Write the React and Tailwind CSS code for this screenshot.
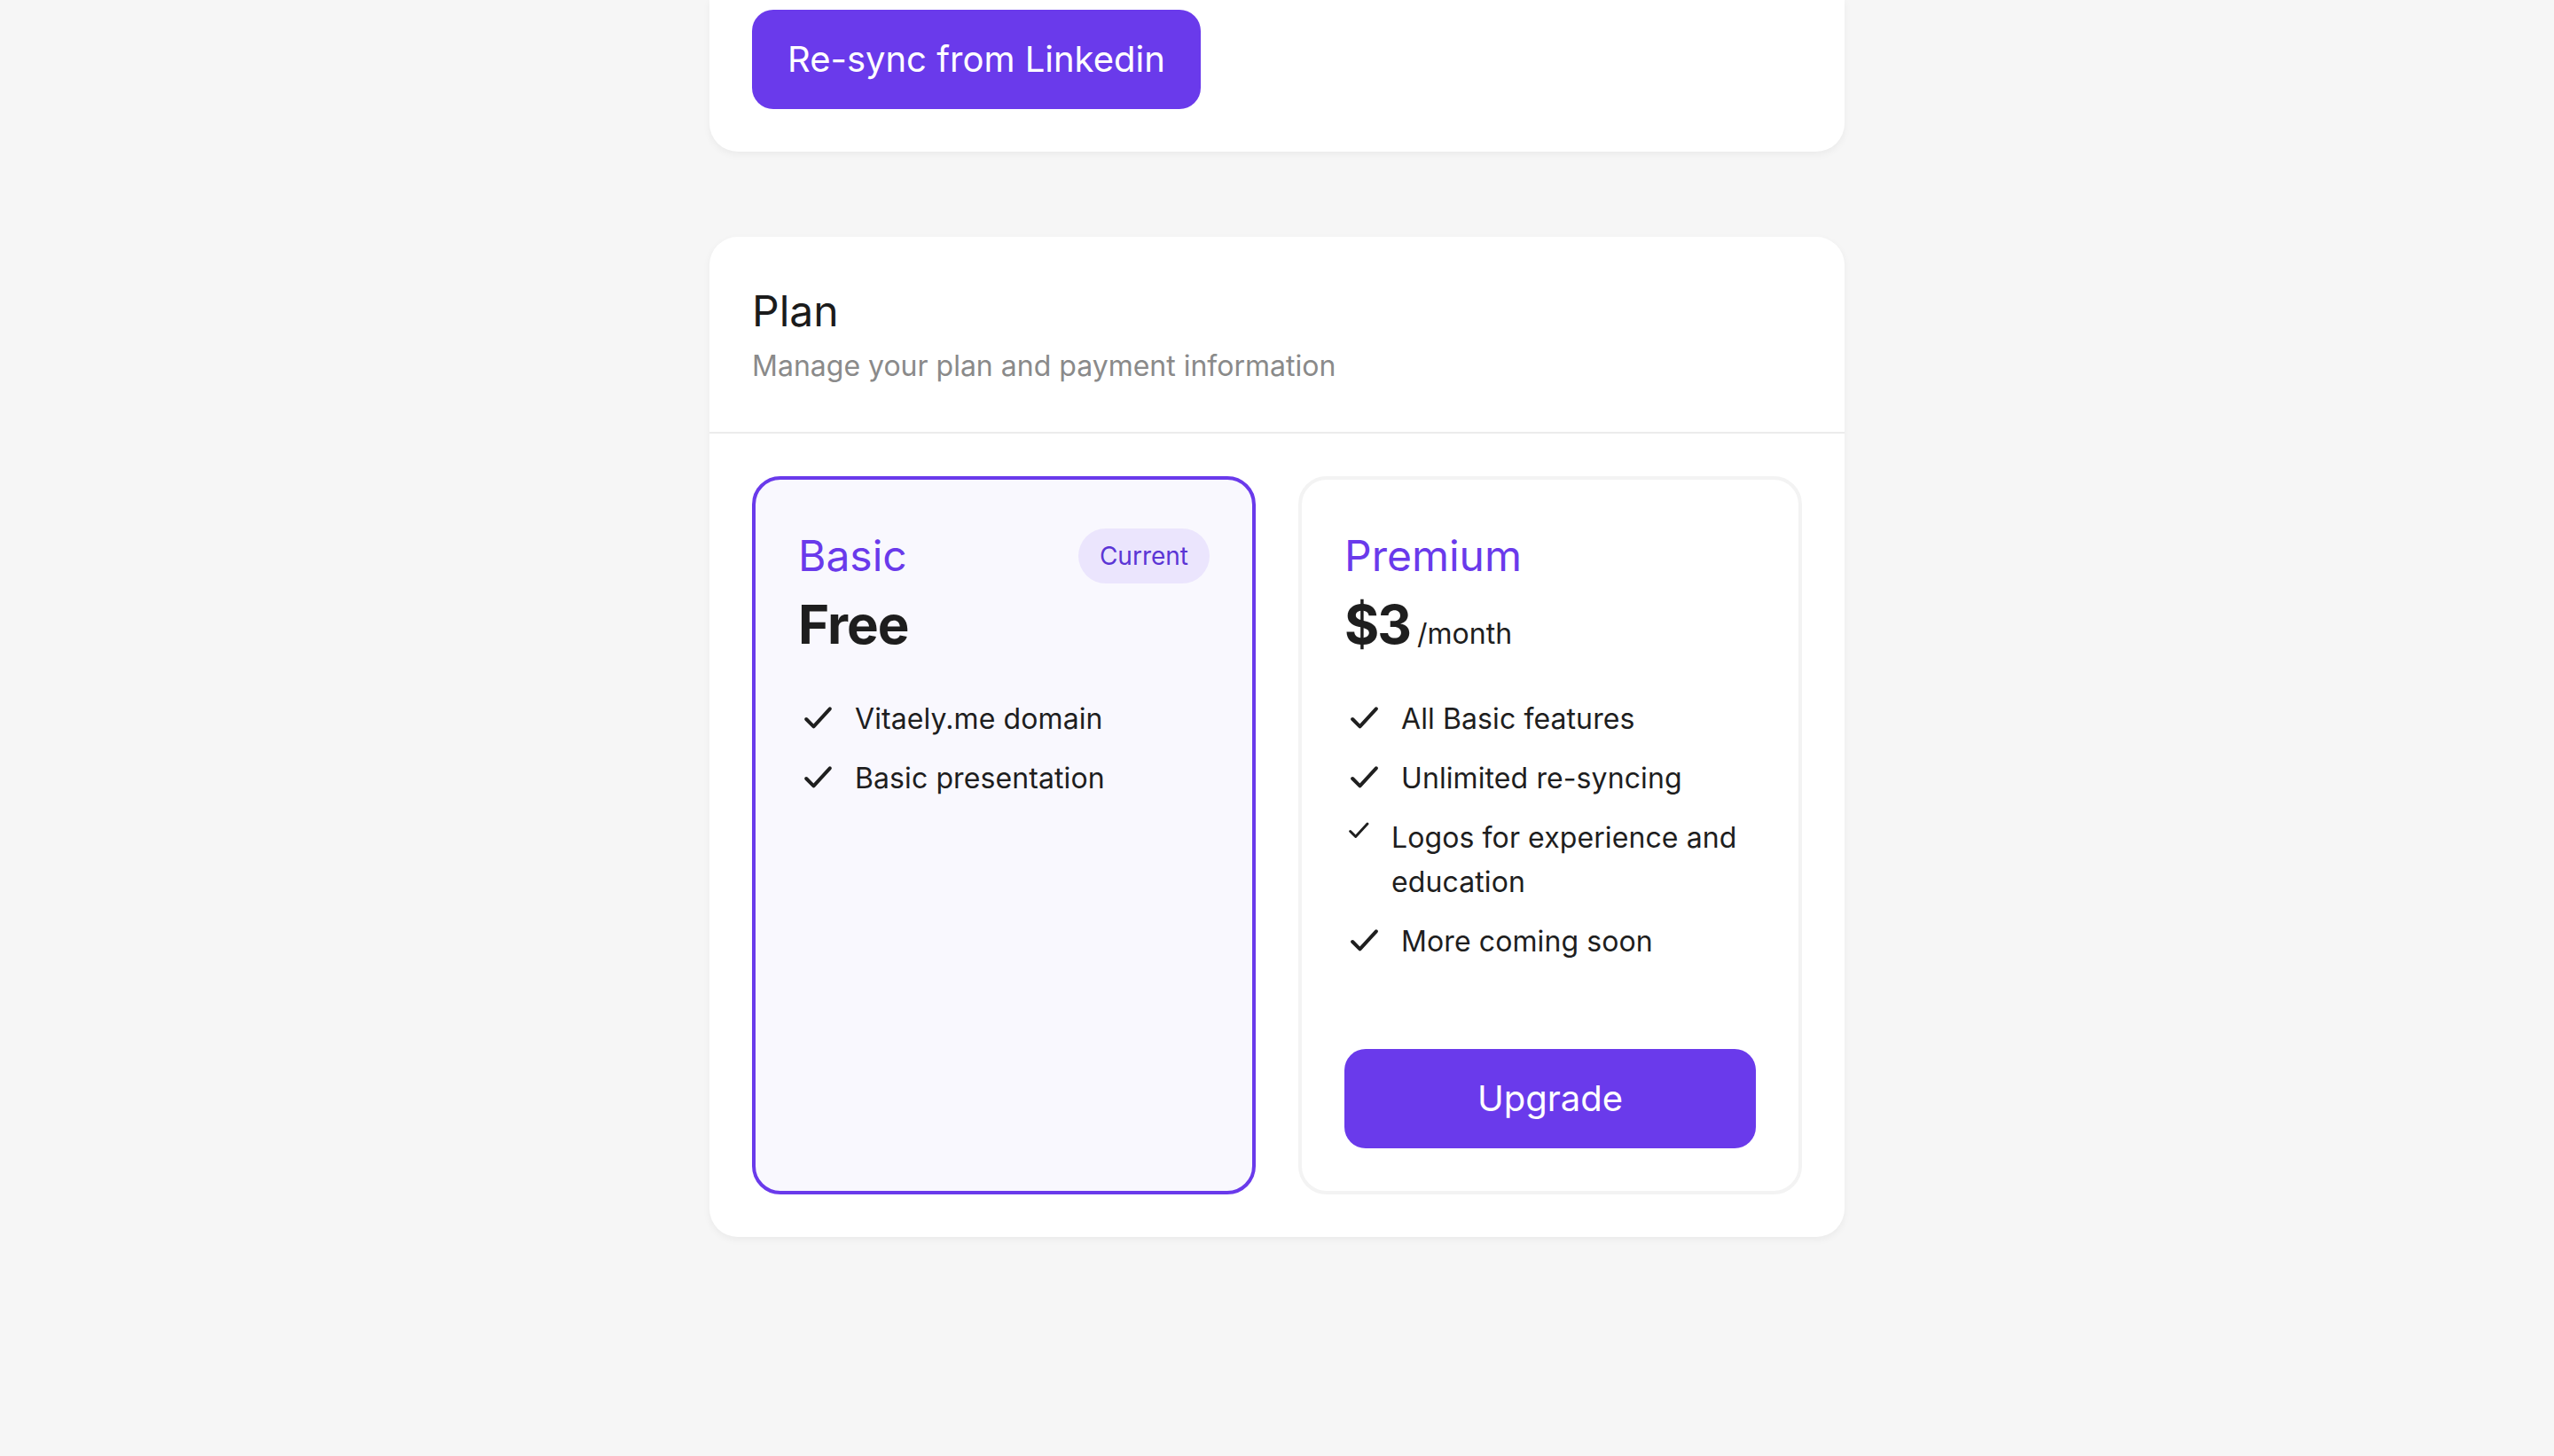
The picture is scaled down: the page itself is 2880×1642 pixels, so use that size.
import React from "react";

function Check({ size = 40, className = "" }) {
  return (
    <svg
      width={size}
      height={size}
      viewBox="0 0 24 24"
      fill="none"
      stroke="#1f1f1f"
      strokeWidth="2.4"
      strokeLinecap="round"
      strokeLinejoin="round"
      className={"shrink-0 " + className}
    >
      <path d="M5.5 12l5 5L21.5 5" />
    </svg>
  );
}

function Feature({ children, small }) {
  return (
    <li className="flex items-start gap-6 leading-[50px]">
      {small ? (
        <Check size={29} className="mt-[3px]" />
      ) : (
        <Check size={40} className="mt-[5px]" />
      )}
      <span>{children}</span>
    </li>
  );
}

export default function App() {
  return (
    <div
      className="min-h-[1642px] w-full bg-[#f6f6f6] text-[#1e1e1e]"
      style={{ fontFamily: "Inter, 'Noto Sans', sans-serif" }}
    >
      <div className="mx-auto flex w-[1280px] flex-col gap-[96px]">
        {/* Top card (scrolled) */}
        <div className="rounded-b-[32px] bg-white px-12 pb-12 pt-[11px] shadow-[0_3px_8px_rgba(0,0,0,0.05)]">
          <button className="h-[112px] rounded-[24px] bg-[#6a3aeb] px-10 text-[40px] text-white">
            Re-sync from Linkedin
          </button>
        </div>

        {/* Plan card */}
        <div className="rounded-[32px] bg-white shadow-[0_3px_8px_rgba(0,0,0,0.05)]">
          <div className="border-b-2 border-[#ececec] px-12 pb-[50px] pt-[52px]">
            <h2 className="text-[48px] leading-[64px] text-[#1b1b1b]">Plan</h2>
            <p className="mt-[6px] text-[32px] leading-[48px] text-[#8a8a8a]">
              Manage your plan and payment information
            </p>
          </div>

          <div className="grid grid-cols-2 gap-12 p-12">
            {/* Basic */}
            <div className="rounded-[32px] border-4 border-[#6a3aeb] bg-[#f9f8fe] px-12 pb-12 pt-[54px]">
              <div className="flex h-[64px] items-center justify-between">
                <span className="text-[48px] leading-[64px] text-[#6a3aeb]">Basic</span>
                <span className="flex h-[62px] items-center rounded-full bg-[#ebe5fd] px-6 text-[28px] text-[#5b35d5]">
                  Current
                </span>
              </div>
              <div className="mt-[9px] h-[72px] text-[60px] font-bold leading-[72px] tracking-[-1px]">Free</div>
              <ul className="mt-[46px] flex flex-col gap-[17px] text-[32px] tracking-[0.1px]">
                <Feature>Vitaely.me domain</Feature>
                <Feature>Basic presentation</Feature>
              </ul>
            </div>

            {/* Premium */}
            <div className="flex flex-col rounded-[32px] border-4 border-[#f3f3f3] bg-white px-12 pb-12 pt-[54px]">
              <div className="h-[64px] text-[48px] leading-[64px] text-[#6a3aeb]">Premium</div>
              <div className="mt-[9px] flex h-[72px] items-baseline gap-2 leading-[72px]">
                <span className="text-[60px] font-bold tracking-[-2px]">$3</span>
                <span className="text-[32px]">/month</span>
              </div>
              <ul className="mt-[46px] flex flex-col gap-[17px] text-[32px] tracking-[0.1px]">
                <Feature>All Basic features</Feature>
                <Feature>Unlimited re-syncing</Feature>
                <Feature small>
                  Logos for experience and
                  <br />
                  education
                </Feature>
                <Feature>More coming soon</Feature>
              </ul>
              <button className="mt-[96px] h-[112px] w-full rounded-[24px] bg-[#6a3aeb] text-[40px] text-white">
                Upgrade
              </button>
            </div>
          </div>
        </div>
      </div>
    </div>
  );
}
